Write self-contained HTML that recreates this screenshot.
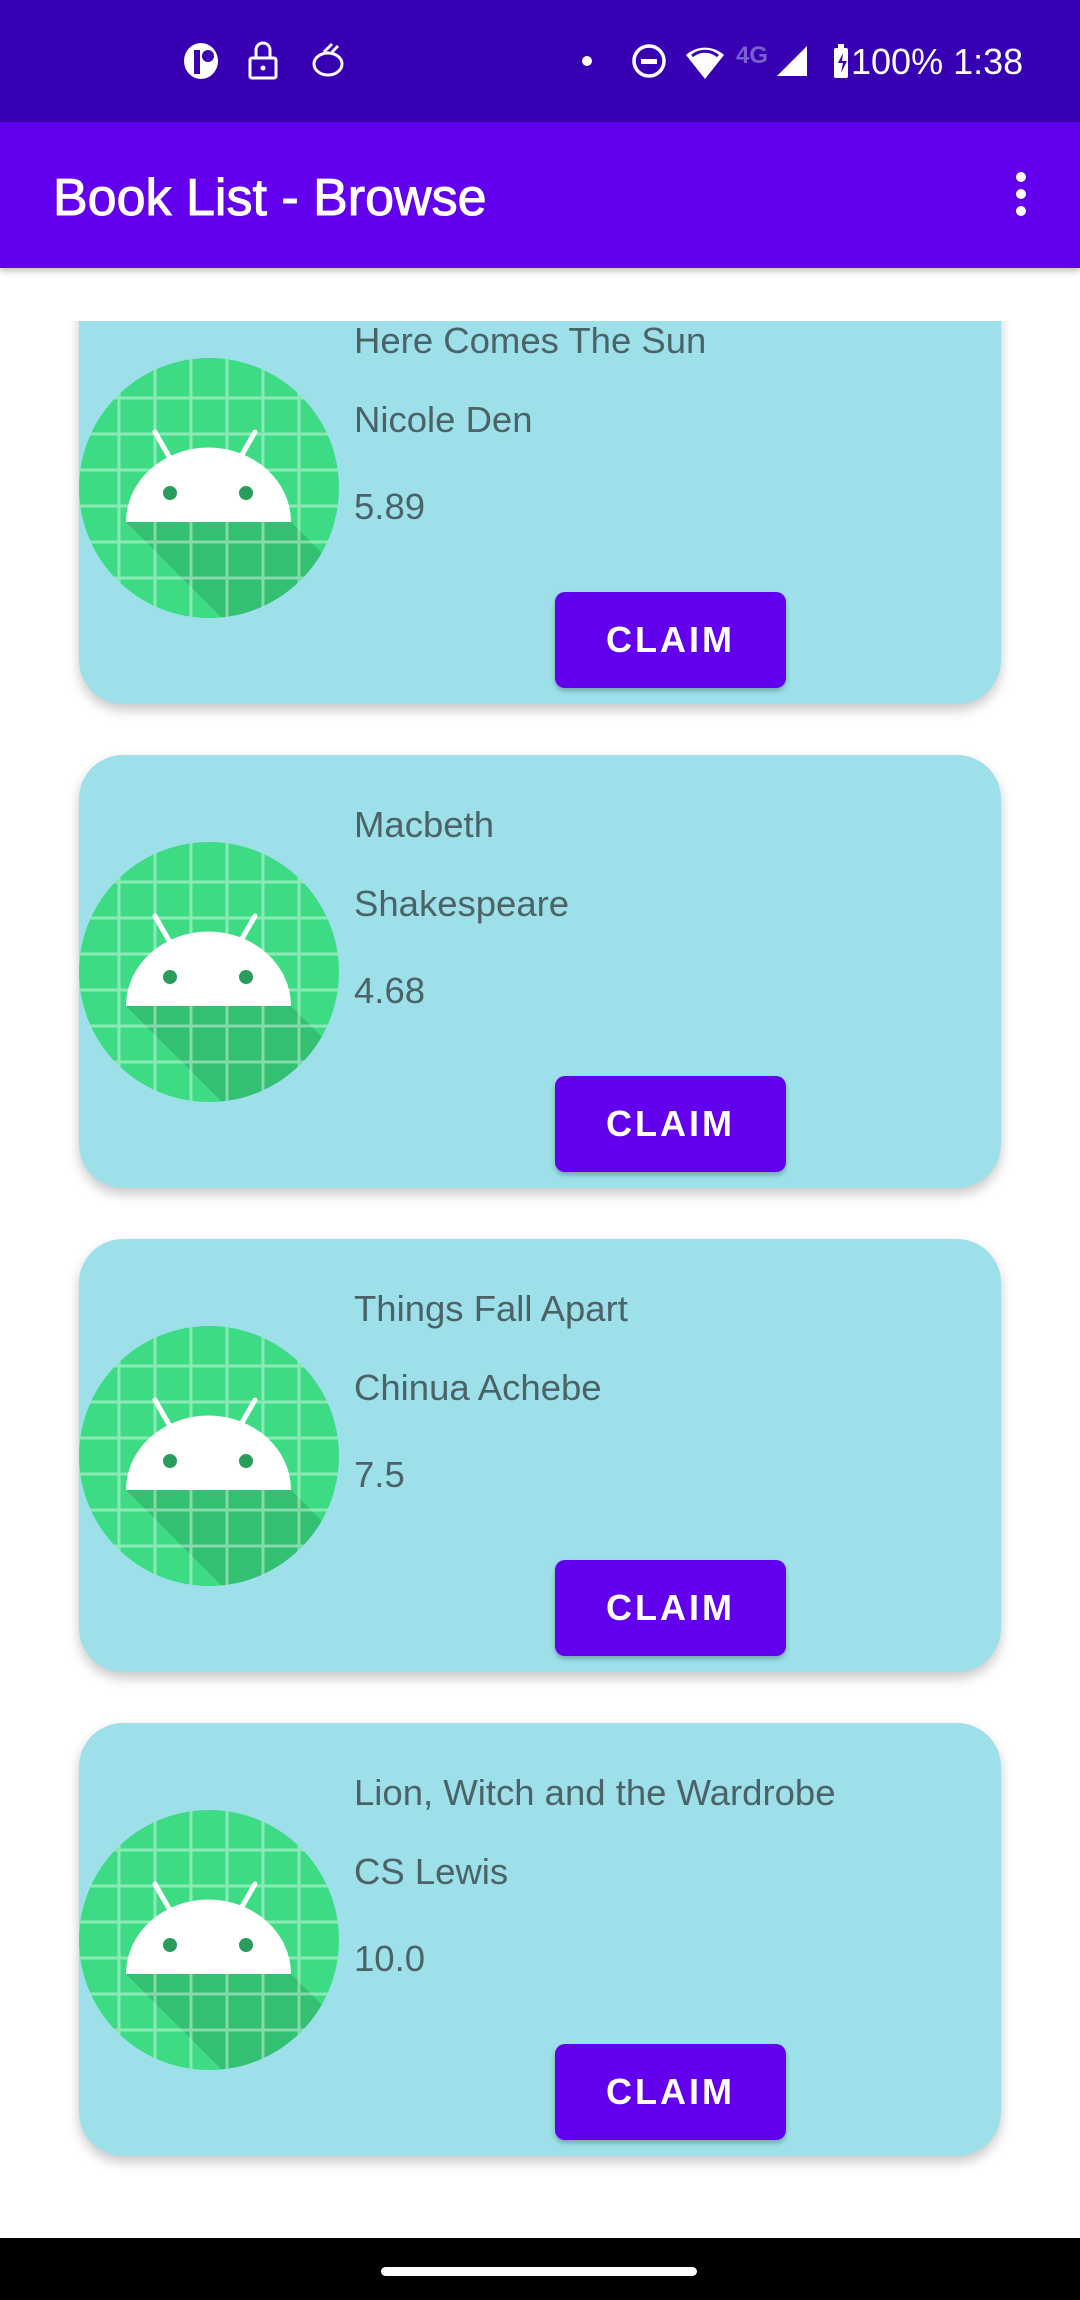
<!DOCTYPE html>
<html><head><meta charset="utf-8"><style>
*{margin:0;padding:0;box-sizing:border-box}
body{width:1080px;height:2300px;position:relative;background:#fff;font-family:"Liberation Sans",sans-serif;overflow:hidden}
.sb{position:absolute;left:0;top:0;width:1080px;height:122px;background:#3700B3;color:#fff}
.ab{position:absolute;left:0;top:122px;width:1080px;height:146px;background:#6200EE;box-shadow:0 3px 6px rgba(0,0,0,.25)}
.ab h1{position:absolute;left:53px;top:46px;font-size:52px;font-weight:500;color:#fff;-webkit-text-stroke:1px #fff}
.dots{position:absolute;right:54px;top:50px;width:10px}
.dots i{display:block;width:10px;height:10px;border-radius:50%;background:#fff;margin-bottom:7px}
.list{position:absolute;left:0;top:321px;width:1080px;height:1917px;overflow:hidden}
.card{position:absolute;left:79px;width:922px;height:433px;background:#9DE0E9;border-radius:44px;box-shadow:0 6px 12px rgba(0,0,0,.22)}
.card svg{position:absolute;left:0;top:87px}
.t{position:absolute;left:275px;font-size:36.5px;color:#4b6366}
.btn{position:absolute;left:476px;top:321px;width:231px;height:96px;background:#6200EE;border-radius:10px;color:#fff;font-size:36px;font-weight:bold;letter-spacing:3px;text-align:center;line-height:96px;box-shadow:0 3px 5px rgba(0,0,0,.25)}
.nav{position:absolute;left:0;top:2238px;width:1080px;height:62px;background:#000}
.nav i{position:absolute;left:381px;top:29px;width:316px;height:9px;border-radius:5px;background:#fff}
</style></head><body>
<div class="sb">
<svg width="1080" height="122" style="position:absolute;left:0;top:0">
<ellipse cx="201" cy="61" rx="17" ry="18" fill="#fff"/><rect x="194" y="50" width="6" height="24" fill="#3700B3"/><circle cx="208" cy="56" r="6" fill="#3700B3"/>
<rect x="250" y="58" width="26" height="20" rx="2" fill="none" stroke="#fff" stroke-width="3"/><path d="M256 58v-8a7 7 0 0 1 14 0v8" fill="none" stroke="#fff" stroke-width="3"/><circle cx="263" cy="68" r="2.5" fill="#fff"/>
<ellipse cx="328" cy="64" rx="14" ry="11" fill="none" stroke="#fff" stroke-width="3"/><path d="M324 52l8-8M332 52l6-6" stroke="#fff" stroke-width="3"/>
<circle cx="587" cy="61" r="5" fill="#fff"/>
<circle cx="649" cy="61" r="15" fill="none" stroke="#fff" stroke-width="3.5"/><rect x="641" y="59" width="16" height="5" fill="#fff"/>
<path d="M686 55a28 28 0 0 1 38 0l-19 24z" fill="#fff"/><path d="M692 56a20 20 0 0 1 26 0" stroke="#3700B3" stroke-width="3" fill="none"/>
<text x="736" y="63" font-family="Liberation Sans" font-weight="bold" font-size="24" fill="#7b5fd0">4G</text>
<path d="M777 76l30-30v30z" fill="#fff"/>
<rect x="834" y="48" width="14" height="30" rx="2" fill="#fff"/><rect x="838" y="44" width="6" height="5" fill="#fff"/><path d="M843 53l-5 10h5l-2 10 6-12h-5z" fill="#3700B3"/>
<text x="851" y="74" font-family="Liberation Sans" font-size="36" fill="#fff">100% 1:38</text>
</svg>
</div>
<div class="ab"><h1>Book List - Browse</h1><div class="dots"><i></i><i></i><i></i></div></div>
<svg width="0" height="0" style="position:absolute"><defs>
<clipPath id="cc"><circle cx="130" cy="130" r="130"/></clipPath>
<g id="andr">
<g clip-path="url(#cc)">
<rect width="260" height="260" fill="#3ddc84"/>
<path d="M47 164 L212 164 L260 212 L260 260 L143 260 Z" fill="#2a9d5e" opacity=".45"/>
<g stroke="#fff" stroke-opacity=".4" stroke-width="3">
<path d="M40 0v260M76 0v260M112 0v260M148 0v260M184 0v260M220 0v260M0 40h260M0 76h260M0 112h260M0 148h260M0 184h260M0 220h260"/>
</g>
</g>
<path d="M47 164 A82 74 0 0 1 212 164 Z" fill="#fff"/>
<path d="M76 74 L92 102 M176 74 L160 102" stroke="#fff" stroke-width="5" stroke-linecap="round"/>
<circle cx="91" cy="135" r="7" fill="#2a9d5e"/><circle cx="167" cy="135" r="7" fill="#2a9d5e"/>
</g></defs></svg>
<div class="list">
<div class="card" style="top:-50px"><svg width="260" height="260"><use href="#andr"/></svg><div class="t" style="top:49px">Here Comes The Sun</div><div class="t" style="top:128px">Nicole Den</div><div class="t" style="top:215px">5.89</div><div class="btn">CLAIM</div></div>
<div class="card" style="top:434px"><svg width="260" height="260"><use href="#andr"/></svg><div class="t" style="top:49px">Macbeth</div><div class="t" style="top:128px">Shakespeare</div><div class="t" style="top:215px">4.68</div><div class="btn">CLAIM</div></div>
<div class="card" style="top:918px"><svg width="260" height="260"><use href="#andr"/></svg><div class="t" style="top:49px">Things Fall Apart</div><div class="t" style="top:128px">Chinua Achebe</div><div class="t" style="top:215px">7.5</div><div class="btn">CLAIM</div></div>
<div class="card" style="top:1402px"><svg width="260" height="260"><use href="#andr"/></svg><div class="t" style="top:49px">Lion, Witch and the Wardrobe</div><div class="t" style="top:128px">CS Lewis</div><div class="t" style="top:215px">10.0</div><div class="btn">CLAIM</div></div>
</div>
<div class="nav"><i></i></div>
</body></html>
